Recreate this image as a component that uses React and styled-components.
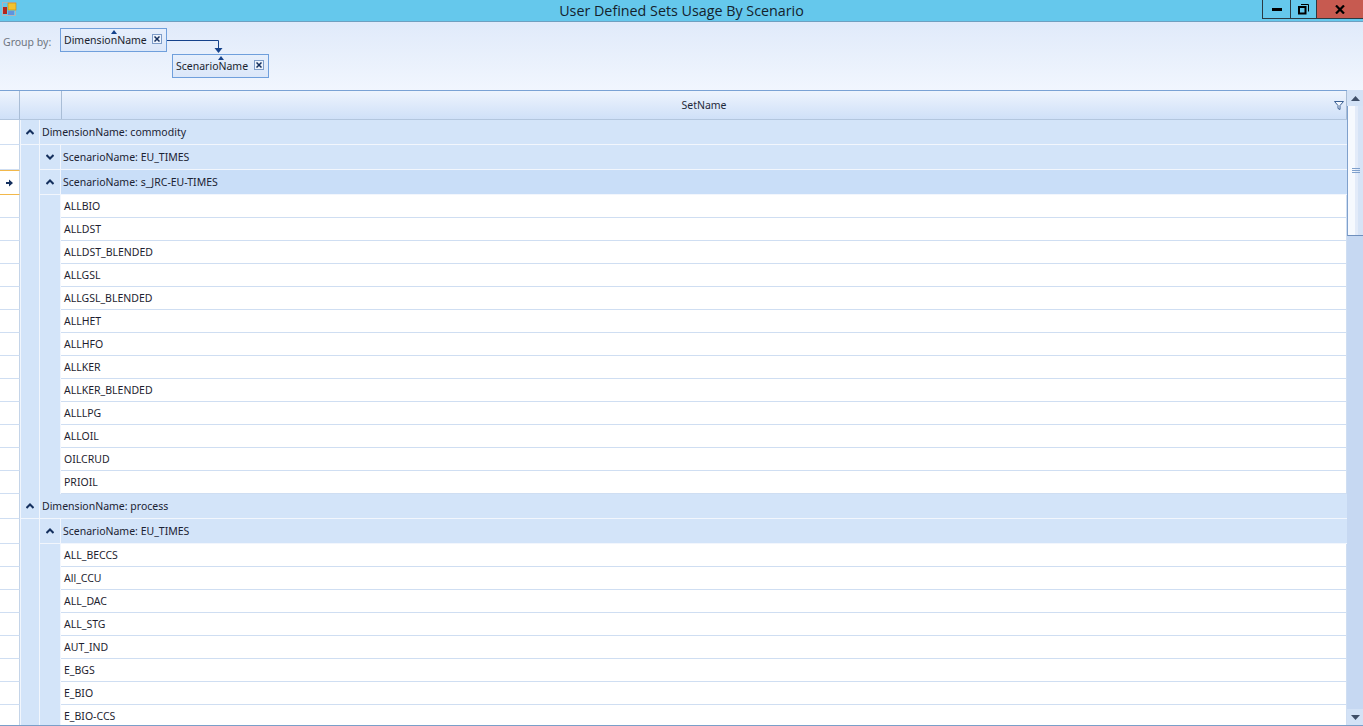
import React from "react";
import styled, { createGlobalStyle } from "styled-components";

const GlobalStyle = createGlobalStyle`
  html, body {
    margin: 0;
    padding: 0;
    height: 100%;
    overflow: hidden;
    background: #fff;
  }
  #root {
    height: 726px;
  }
`;

const Window = styled.div`
  width: 1363px;
  height: 726px;
  display: flex;
  flex-direction: column;
  overflow: hidden;
  font-family: "Noto Sans", "Open Sans", sans-serif;
  font-size: 10.5px;
  color: #1b1b2a;
  border-bottom: 1px solid #7a9fc9;
  box-sizing: border-box;
`;

const TitleBar = styled.div`
  height: 21px;
  flex: none;
  position: relative;
  display: flex;
  align-items: center;
  justify-content: center;
  background: #65c8ec;
  border-bottom: 1px solid #6f9fc0;
`;

const AppIcon = styled.svg`
  position: absolute;
  left: 2px;
  top: 2px;
`;

const Title = styled.div`
  font-family: "Open Sans", sans-serif;
  font-size: 14.3px;
  color: #14222c;
`;

const WindowButtons = styled.div`
  position: absolute;
  right: 0;
  top: 0;
  display: flex;
  height: 18px;
  border-left: 1px solid #2b3a42;
  border-bottom: 1px solid #2b3a42;
`;

const WindowButton = styled.div`
  width: ${(p) => p.$w}px;
  height: 18px;
  display: flex;
  align-items: center;
  justify-content: center;
  box-sizing: border-box;
  background: ${(p) => (p.$close ? "#c75a50" : "transparent")};
  border-right: ${(p) => (p.$close ? "none" : "1px solid #2b3a42")};
`;

const GroupPanel = styled.div`
  height: 68px;
  flex: none;
  position: relative;
  background: linear-gradient(#e0eafa, #f1f6fe);
`;

const GroupLabel = styled.span`
  position: absolute;
  left: 3px;
  top: 13px;
  color: #6e7580;
`;

const Chip = styled.div`
  position: absolute;
  left: ${(p) => p.$x}px;
  top: ${(p) => p.$y}px;
  width: ${(p) => p.$w}px;
  height: 24px;
  box-sizing: border-box;
  display: flex;
  align-items: center;
  justify-content: space-between;
  padding: 0 4px 1px 3px;
  border: 1px solid #6f9fdc;
  background: linear-gradient(#e6effc, #dbe7f9);
  color: #1a1f2e;
`;

const ChipMark = styled.span`
  position: absolute;
  left: 50%;
  top: 1px;
  margin-left: -3px;
  border-left: 3.5px solid transparent;
  border-right: 3.5px solid transparent;
  border-bottom: 4px solid #15428b;
`;

const ChipClose = styled.span`
  width: 10px;
  height: 10px;
  box-sizing: border-box;
  border: 1px solid #7d9cc8;
  background: #edf3fc;
  display: flex;
  align-items: center;
  justify-content: center;
  margin-top: -2px;
`;

const Connector = styled.svg`
  position: absolute;
  left: 166px;
  top: 17px;
`;

const Body = styled.div`
  flex: 1;
  min-height: 0;
  display: flex;
`;

const Grid = styled.div`
  flex: 1;
  min-width: 0;
  overflow: hidden;
  display: flex;
  flex-direction: column;
  border-top: 1px solid #7aa2d4;
`;

const HeaderRow = styled.div`
  height: 28px;
  flex: none;
  display: flex;
  border-bottom: 1px solid #b3c6de;
`;

const HeaderCell = styled.div`
  width: ${(p) => (p.$w ? `${p.$w}px` : "auto")};
  flex: ${(p) => (p.$w ? "none" : 1)};
  box-sizing: border-box;
  position: relative;
  display: flex;
  align-items: center;
  justify-content: center;
  background: linear-gradient(#eef4fd, #cfe0f8);
  border-right: 1px solid #a9bdd6;
  color: #1f2a3a;
`;

const FilterIcon = styled.svg`
  position: absolute;
  right: 2px;
  top: 10px;
`;

const Row = styled.div`
  height: ${(p) => p.$h}px;
  flex: none;
  display: flex;
`;

const Indicator = styled.div`
  width: 20px;
  flex: none;
  box-sizing: border-box;
  display: flex;
  align-items: center;
  justify-content: center;
  background: #fff;
  border-right: 1px solid #c4d4e8;
  border-bottom: 1px solid ${(p) => (p.$current ? "#f2b84b" : "#cfdef2")};
  border-top: ${(p) => (p.$current ? "1px solid #f2b84b" : "none")};
`;

const Indent = styled.div`
  width: ${(p) => p.$w}px;
  flex: none;
  background: #d3e4f9;
  border-right: 1px solid #f2f6fd;
  border-left: ${(p) => (p.$first ? "1px solid #f2f6fd" : "none")};
  box-sizing: border-box;
`;

const Expander = styled(Indent)`
  display: flex;
  align-items: center;
  justify-content: center;
  border-bottom: 1px solid #f2f6fd;
`;

const GroupCell = styled.div`
  flex: 1;
  display: flex;
  align-items: center;
  padding-left: 2px;
  padding-bottom: 1px;
  background: ${(p) => (p.$active ? "#c9def8" : "#d3e4f9")};
  border-bottom: 1px solid #f2f6fd;
  color: #1b2333;
`;

const DataCell = styled.div`
  flex: 1;
  box-sizing: border-box;
  display: flex;
  align-items: center;
  padding-left: 3px;
  background: #fff;
  border-bottom: 1px solid #cfdef2;
  border-right: 1px solid #cfdef2;
  color: #1e1e30;
`;

const Scrollbar = styled.div`
  width: 16px;
  flex: none;
  display: flex;
  flex-direction: column;
  background: #d3e2f6;
`;

const ScrollButton = styled.div`
  height: ${(p) => p.$h}px;
  flex: none;
  display: flex;
  align-items: center;
  justify-content: center;
`;

const ScrollThumb = styled.div`
  height: 130px;
  flex: none;
  margin-left: 0;
  box-sizing: border-box;
  border-left: 1px solid #7fa0cc;
  border-bottom: 1px solid #6f8fbd;
  background: linear-gradient(90deg, #f6f9fe 0 44%, #e3ebf9 44% 66%, #d6e3f6 66%);
  display: flex;
  align-items: center;
  justify-content: center;
`;

const ScrollTrack = styled.div`
  flex: 1;
  background: #c6d8f2;
`;

const Chevron = ({ up }) => (
  <svg width="8" height="6" viewBox="0 0 8 6">
    <path d={up ? "M0.5 5 L4 1.5 L7.5 5" : "M0.5 1 L4 4.5 L7.5 1"} fill="none" stroke="#15305e" strokeWidth="2" />
  </svg>
);

const Triangle = ({ up }) => (
  <svg width="9" height="5" viewBox="0 0 9 5">
    <path d={up ? "M4.5 0 L9 5 H0 Z" : "M0 0 H9 L4.5 5 Z"} fill="#3f4f68" />
  </svg>
);

const CloseGlyph = () => (
  <svg width="6" height="6" viewBox="0 0 6 6">
    <path d="M0.5 0.5 L5.5 5.5 M5.5 0.5 L0.5 5.5" stroke="#15305e" strokeWidth="1.5" />
  </svg>
);

// one level of the grouped data
const groups = [
  {
    dim: "commodity",
    scenarios: [
      { name: "EU_TIMES", open: false, items: [] },
      {
        name: "s_JRC-EU-TIMES",
        open: true,
        current: true,
        items: ["ALLBIO", "ALLDST", "ALLDST_BLENDED", "ALLGSL", "ALLGSL_BLENDED", "ALLHET", "ALLHFO", "ALLKER", "ALLKER_BLENDED", "ALLLPG", "ALLOIL", "OILCRUD", "PRIOIL"],
      },
    ],
  },
  {
    dim: "process",
    scenarios: [
      {
        name: "EU_TIMES",
        open: true,
        items: ["ALL_BECCS", "All_CCU", "ALL_DAC", "ALL_STG", "AUT_IND", "E_BGS", "E_BIO", "E_BIO-CCS"],
      },
    ],
  },
];

export default function App() {
  return (
    <Window>
      <GlobalStyle />
      <TitleBar>
        <AppIcon width="16" height="16" viewBox="0 0 16 16">
          <rect x="0.5" y="0.5" width="13" height="13" fill="none" stroke="#b0b4b8" />
          <rect x="1" y="5" width="4" height="7" fill="#b3261e" />
          <rect x="6" y="1" width="8" height="7" fill="#f2c230" stroke="#c08a10" strokeWidth="0.6" />
          <rect x="6" y="9" width="6" height="4" fill="#5f93df" />
        </AppIcon>
        <Title>User Defined Sets Usage By Scenario</Title>
        <WindowButtons>
          <WindowButton $w={28}>
            <svg width="10" height="3"><rect width="10" height="3" fill="#000" /></svg>
          </WindowButton>
          <WindowButton $w={26}>
            <svg width="11" height="11" viewBox="0 0 11 11">
              <path d="M3 0.5 H10.5 V7.5" fill="none" stroke="#000" />
              <rect x="1" y="3" width="6.5" height="6.5" fill="none" stroke="#000" strokeWidth="2" />
            </svg>
          </WindowButton>
          <WindowButton $w={46} $close>
            <svg width="10" height="9" viewBox="0 0 10 9">
              <path d="M1 0.5 L9 8.5 M9 0.5 L1 8.5" stroke="#000" strokeWidth="2.2" />
            </svg>
          </WindowButton>
        </WindowButtons>
      </TitleBar>

      <GroupPanel>
        <GroupLabel>Group by:</GroupLabel>
        <Chip $x={60} $y={6} $w={107}>
          <ChipMark />
          DimensionName
          <ChipClose><CloseGlyph /></ChipClose>
        </Chip>
        <Chip $x={172} $y={32} $w={97}>
          <ChipMark />
          ScenarioName
          <ChipClose><CloseGlyph /></ChipClose>
        </Chip>
        <Connector width="60" height="16" viewBox="0 0 60 16">
          <path d="M1 1.5 H52.5 V10" fill="none" stroke="#15428b" />
          <path d="M48.5 9 H56.5 L52.5 14 Z" fill="#15428b" />
        </Connector>
      </GroupPanel>

      <Body>
        <Grid>
          <HeaderRow>
            <HeaderCell $w={20} />
            <HeaderCell $w={42} />
            <HeaderCell>
              SetName
              <FilterIcon width="10" height="9" viewBox="0 0 10 9">
                <path d="M0.5 0.5 H9.5 L6 4.5 V8.5 L4 7.5 V4.5 Z" fill="#f4f8fe" stroke="#3a5f92" />
              </FilterIcon>
            </HeaderCell>
          </HeaderRow>
          {groups.map((g) => (
            <React.Fragment key={g.dim}>
              <Row $h={25}>
                <Indicator />
                <Expander $w={20} $first><Chevron up /></Expander>
                <GroupCell>DimensionName: {g.dim}</GroupCell>
              </Row>
              {g.scenarios.map((s) => (
                <React.Fragment key={s.name}>
                  <Row $h={25}>
                    <Indicator $current={s.current}>
                      {s.current && (
                        <svg width="7" height="8" viewBox="0 0 7 8">
                          <path d="M0 3 H3 V0.5 L7 4 L3 7.5 V5 H0 Z" fill="#15305e" />
                        </svg>
                      )}
                    </Indicator>
                    <Indent $w={20} $first />
                    <Expander $w={21}><Chevron up={s.open} /></Expander>
                    <GroupCell $active={s.current}>ScenarioName: {s.name}</GroupCell>
                  </Row>
                  {s.items.map((item) => (
                    <Row $h={23} key={item}>
                      <Indicator />
                      <Indent $w={20} $first />
                      <Indent $w={21} />
                      <DataCell>{item}</DataCell>
                    </Row>
                  ))}
                </React.Fragment>
              ))}
            </React.Fragment>
          ))}
        </Grid>
        <Scrollbar>
          <ScrollButton $h={16}><Triangle up /></ScrollButton>
          <ScrollThumb>
            <svg width="8" height="5" viewBox="0 0 8 5">
              <path d="M0 0.5 H8 M0 2.5 H8 M0 4.5 H8" stroke="#7fa0cc" />
            </svg>
          </ScrollThumb>
          <ScrollTrack />
          <ScrollButton $h={16}><Triangle /></ScrollButton>
        </Scrollbar>
      </Body>
    </Window>
  );
}
